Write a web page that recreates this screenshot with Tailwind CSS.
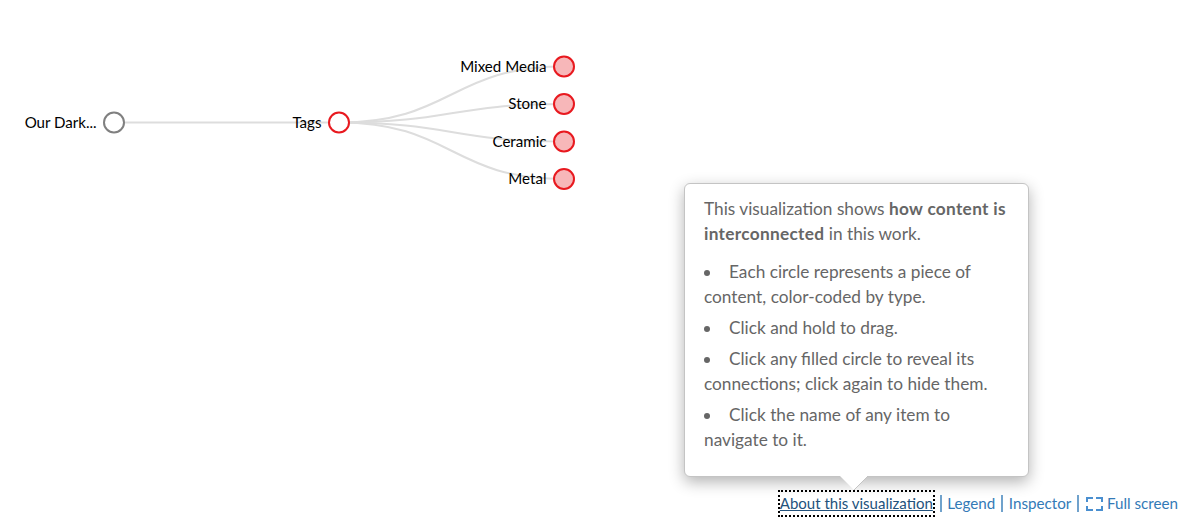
<!DOCTYPE html>
<html>
<head>
<meta charset="utf-8">
<script src="https://cdn.jsdelivr.net/npm/@tailwindcss/browser@4"></script>
</head>
<body class="bg-white font-['Lato','sans-serif']">
<div class="relative w-[1185px] h-[518px] overflow-hidden">
  <svg class="absolute left-0 top-0" width="1185" height="518" viewBox="0 0 1185 518">
    <g fill="none" stroke="#dddddd" stroke-width="2">
      <path d="M114 122.5H339"/>
      <path d="M339 122.5C451.5 122.5 451.5 66.5 564 66.5"/>
      <path d="M339 122.5C451.5 122.5 451.5 104 564 104"/>
      <path d="M339 122.5C451.5 122.5 451.5 141.5 564 141.5"/>
      <path d="M339 122.5C451.5 122.5 451.5 179 564 179"/>
    </g>
    <g stroke-width="2">
      <circle cx="114" cy="122.5" r="10" fill="#fff" stroke="#808080"/>
      <circle cx="339" cy="122.5" r="10" fill="#fff" stroke="#e8191f"/>
      <circle cx="564" cy="66.5" r="10" fill="#f7b7b9" stroke="#e8191f"/>
      <circle cx="564" cy="104" r="10" fill="#f7b7b9" stroke="#e8191f"/>
      <circle cx="564" cy="141.5" r="10" fill="#f7b7b9" stroke="#e8191f"/>
      <circle cx="564" cy="179" r="10" fill="#f7b7b9" stroke="#e8191f"/>
    </g>
    <g font-family="Lato" font-size="15.1" fill="#000" text-anchor="end">
      <text x="96.7" y="127.5">Our Dark...</text>
      <text x="321.5" y="127.5">Tags</text>
      <text x="546.5" y="71.5">Mixed Media</text>
      <text x="546.5" y="109">Stone</text>
      <text x="546.5" y="146.5">Ceramic</text>
      <text x="546.5" y="184">Metal</text>
    </g>
  </svg>

  <div class="absolute left-[684px] top-[183px] w-[345px] h-[294px] rounded-md border border-[#c4c4c4] bg-white px-[19px] pt-[12px] text-[17.25px] leading-[25px] text-[#666666] shadow-[0_5px_15px_rgba(0,0,0,0.3)]">
    <p class="mb-[13px]">This visualization shows <strong class="font-bold tracking-[0.3px]">how content is interconnected</strong> in this work.</p>
    <ul>
      <li class="mb-[6px]"><span class="inline-block w-[25px] pl-0"><span class="inline-block w-[6px] h-[6px] rounded-full bg-[#666666] align-[2px]"></span></span>Each circle represents a piece of content, color-coded by type.</li>
      <li class="mb-[6px]"><span class="inline-block w-[25px]"><span class="inline-block w-[6px] h-[6px] rounded-full bg-[#666666] align-[2px]"></span></span>Click and hold to drag.</li>
      <li class="mb-[6px]"><span class="inline-block w-[25px]"><span class="inline-block w-[6px] h-[6px] rounded-full bg-[#666666] align-[2px]"></span></span>Click any filled circle to reveal its connections; click again to hide them.</li>
      <li><span class="inline-block w-[25px]"><span class="inline-block w-[6px] h-[6px] rounded-full bg-[#666666] align-[2px]"></span></span>Click the name of any item to navigate to it.</li>
    </ul>
    <svg class="absolute left-[155px] top-[292px]" width="30" height="16" viewBox="0 0 30 16"><path d="M0 0H28L14 14Z" fill="#fff"/><path d="M28 0L14 14" stroke="#c4c4c4" fill="none"/></svg>
  </div>

  <div class="absolute right-[7px] top-[491px] flex items-center text-[15.2px] leading-[25px] text-[#337ab7]">
    <a class="text-[15px] text-[#23527c] underline outline-2 outline-dotted outline-black outline-offset-[-1px] px-[1px]" href="#">About this visualization</a>
    <span class="ml-[6px] mr-[5.5px] h-[17px] w-[2px] bg-[#337ab7]/70"></span>
    <a href="#">Legend</a>
    <span class="ml-[5.5px] mr-[6px] h-[17px] w-[2px] bg-[#337ab7]/70"></span>
    <a href="#">Inspector</a>
    <span class="ml-[6px] mr-[6.5px] h-[17px] w-[2px] bg-[#337ab7]/70"></span>
    <svg class="mr-[4px]" width="17" height="14" viewBox="0 0 17 14" fill="none" stroke="#4a8fd0" stroke-width="2"><path d="M1 5V1H7M10 1H16V5M16 9V13H10M7 13H1V9"/></svg>
    <a href="#">Full screen</a>
  </div>
</div>
</body>
</html>
